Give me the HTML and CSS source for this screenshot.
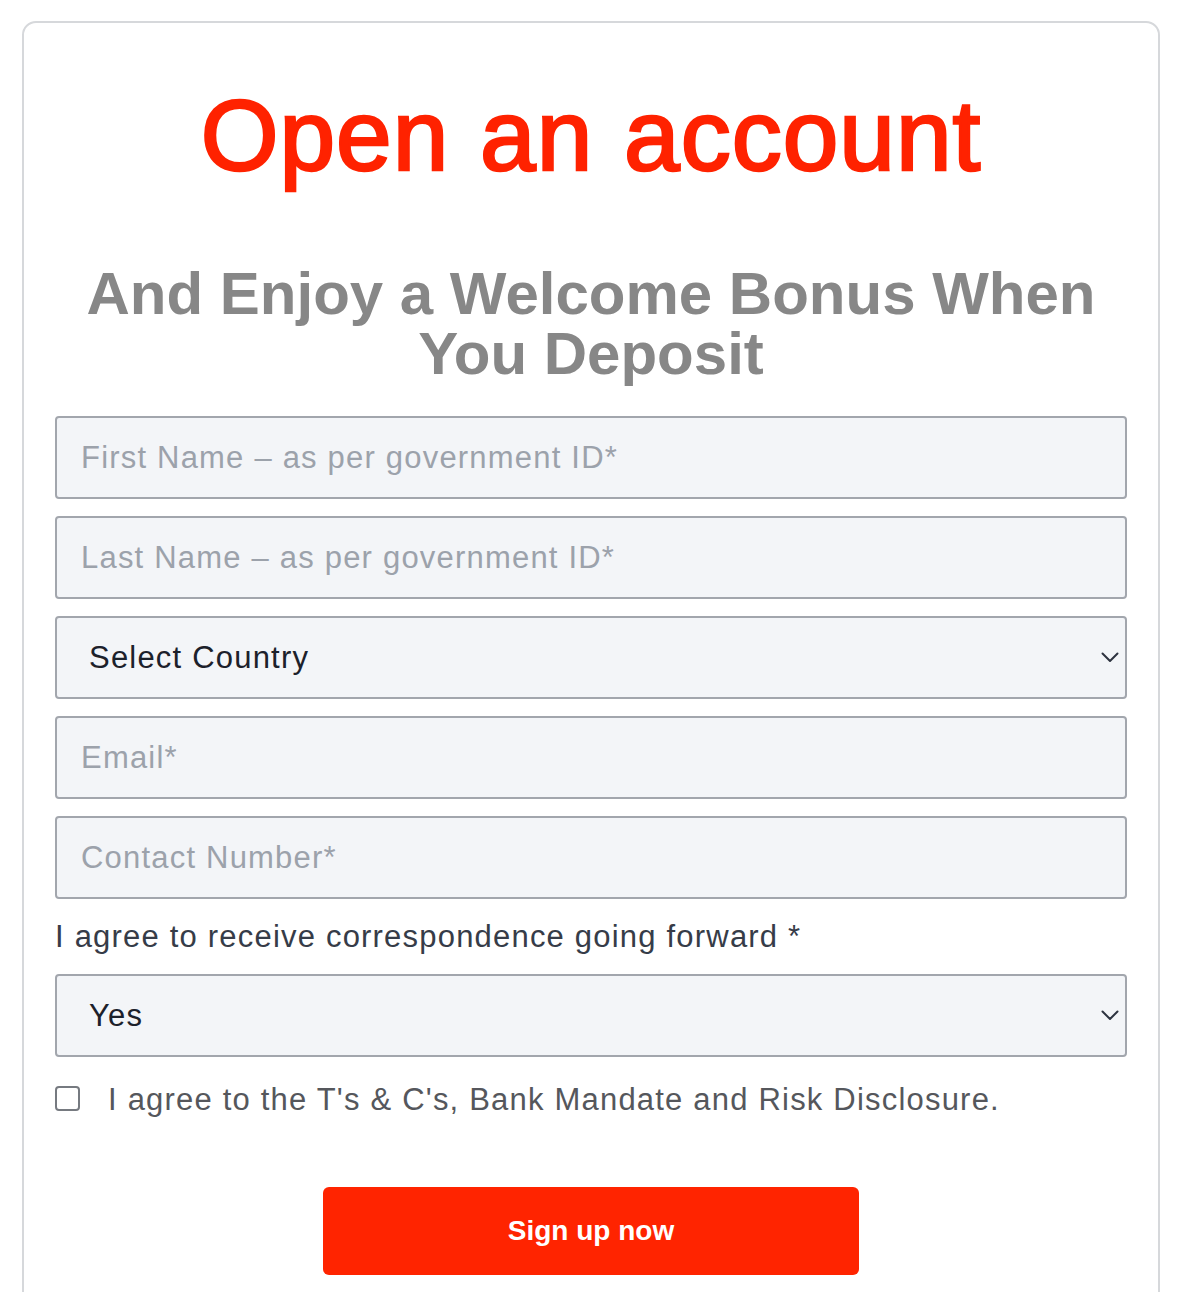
FILE: index.html
```html
<!DOCTYPE html>
<html lang="en">
<head>
<meta charset="utf-8">
<title>Open an account</title>
<link rel="stylesheet" href="styles.css">
</head>
<body>
<div class="card">
  <h1 class="title">Open an account</h1>
  <h2 class="subtitle">And Enjoy a Welcome Bonus When You Deposit</h2>
  <form class="form">
    <input class="field" type="text" placeholder="First Name – as per government ID*">
    <input class="field" type="text" placeholder="Last Name – as per government ID*">
    <div class="select-wrap">
      <select class="field select">
        <option>Select Country</option>
      </select>
      <svg class="chevron" width="18" height="11" viewBox="0 0 18 11"><path d="M1.5 1.5 L9 9 L16.5 1.5" fill="none" stroke="#2d3340" stroke-width="2" stroke-linecap="round" stroke-linejoin="round"/></svg>
    </div>
    <input class="field" type="email" placeholder="Email*">
    <input class="field" type="tel" placeholder="Contact Number*">
    <label class="label">I agree to receive correspondence going forward *</label>
    <div class="select-wrap">
      <select class="field select">
        <option>Yes</option>
        <option>No</option>
      </select>
      <svg class="chevron" width="18" height="11" viewBox="0 0 18 11"><path d="M1.5 1.5 L9 9 L16.5 1.5" fill="none" stroke="#2d3340" stroke-width="2" stroke-linecap="round" stroke-linejoin="round"/></svg>
    </div>
    <label class="check-row">
      <input class="check" type="checkbox">
      <span class="check-text">I agree to the T's &amp; C's, Bank Mandate and Risk Disclosure.</span>
    </label>
    <div class="actions">
      <button class="btn" type="button">Sign up now</button>
    </div>
  </form>
</div>
</body>
</html>
```
FILE: styles.css
```css
html, body {
  margin: 0;
  padding: 0;
  background: #ffffff;
}
body {
  font-family: "Liberation Sans", Arial, sans-serif;
}
.card {
  margin: 21px 22px 0 22px;
  border: 2px solid #d6d8db;
  border-radius: 14px;
  padding: 52px 31px 60px 31px;
  background: #ffffff;
}
.title {
  margin: 0;
  text-align: center;
  font-size: 100px;
  line-height: 120px;
  font-weight: 400;
  letter-spacing: 1px;
  word-spacing: 2px;
  color: #ff2200;
  -webkit-text-stroke: 2.6px #ff2200;
}
.subtitle {
  margin: 69px 0 0 0;
  text-align: center;
  font-size: 60px;
  line-height: 60px;
  font-weight: 700;
  color: #878787;
}
.form {
  margin-top: 32px;
  display: flex;
  flex-direction: column;
}
.field {
  box-sizing: border-box;
  display: block;
  width: 100%;
  height: 83px;
  margin: 0 0 17px 0;
  padding: 0 24px;
  border: 2px solid #a2a6ad;
  border-radius: 4px;
  background: #f3f5f8;
  font-family: "Liberation Sans", Arial, sans-serif;
  font-size: 31px;
  letter-spacing: 1.2px;
  color: #1f2430;
  outline: none;
}
.field::placeholder {
  color: #9ca2ab;
  opacity: 1;
}
.select-wrap {
  position: relative;
}
.select {
  -webkit-appearance: none;
  appearance: none;
  padding-left: 32px;
  color: #1c212b;
}
.chevron {
  position: absolute;
  right: 8px;
  top: 36px;
  pointer-events: none;
}
.label {
  display: block;
  font-size: 31px;
  line-height: 40px;
  letter-spacing: 1.2px;
  color: #363c48;
  margin: 1px 0 17px 0;
}
.check-row {
  display: flex;
  align-items: flex-start;
  gap: 28px;
  margin-top: 6px;
}
.check {
  -webkit-appearance: none;
  appearance: none;
  box-sizing: border-box;
  width: 25px;
  height: 25px;
  margin: 6px 0 0 0;
  border: 2px solid #767a80;
  border-radius: 4px;
  background: #ffffff;
  flex: none;
}
.check:checked {
  background: #ff2200;
  border-color: #ff2200;
}
.check-text {
  font-size: 31px;
  line-height: 40px;
  letter-spacing: 1.2px;
  color: #55575c;
}
.actions {
  display: flex;
  justify-content: center;
  margin-top: 67px;
}
.btn {
  width: 536px;
  height: 88px;
  border: none;
  border-radius: 6px;
  background: #ff2400;
  color: #ffffff;
  font-family: "Liberation Sans", Arial, sans-serif;
  font-size: 28px;
  font-weight: 700;
  cursor: pointer;
}
```
